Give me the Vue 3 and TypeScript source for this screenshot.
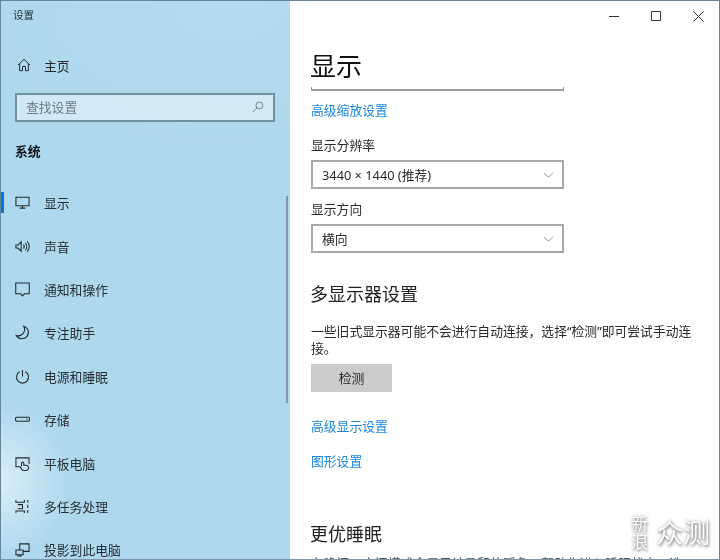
<script setup lang="ts">
const items: { label: string; icon: string }[] = [
  { label: '显示', icon: 'display' },
  { label: '声音', icon: 'sound' },
  { label: '通知和操作', icon: 'notify' },
  { label: '专注助手', icon: 'moon' },
  { label: '电源和睡眠', icon: 'power' },
  { label: '存储', icon: 'storage' },
  { label: '平板电脑', icon: 'tablet' },
  { label: '多任务处理', icon: 'multi' },
  { label: '投影到此电脑', icon: 'project' },
]
</script>

<template>
  <div class="window">
    <aside class="side">
      <div class="wintitle">设置</div>
      <div class="home">
        <svg class="ico" viewBox="0 0 16 16"><path d="M1 8.2 8 1.6l7 6.6M3 6.8v7.7h3.4V9.6h3.2v4.9H13V6.8" /></svg>
        <span>主页</span>
      </div>
      <div class="search">
        <span>查找设置</span>
        <svg class="lens" viewBox="0 0 14 14"><circle cx="8.6" cy="5.2" r="4" /><path d="M5.8 8 1.2 12.8" /></svg>
      </div>
      <div class="group">系统</div>
      <nav class="list">
        <div v-for="(it, i) in items" :key="it.label" class="row" :class="{ on: i === 0 }">
          <svg class="ico rowico" viewBox="0 0 16 16">
            <template v-if="it.icon === 'display'"><path d="M1 2.5h14v9H1zM8 11.5v2.2M5 14h6" /></template>
            <template v-else-if="it.icon === 'sound'"><path d="M1 6.3h2.2L6.6 3v10L3.2 9.7H1zM9 6a3 3 0 0 1 0 4M11 4.2a5.6 5.6 0 0 1 0 7.6M13 2.4a8.4 8.4 0 0 1 0 11.2" /></template>
            <template v-else-if="it.icon === 'notify'"><path d="M.8 1h14.4v11.6H10l-2 2.2-2-2.2H.8z" /></template>
            <template v-else-if="it.icon === 'moon'"><path d="M9.2 1.2a6.8 6.8 0 0 1-7.9 10A6.9 6.9 0 1 0 9.2 1.2z" /></template>
            <template v-else-if="it.icon === 'power'"><path d="M8 1v7M5 3a6.4 6.4 0 1 0 6 0" /></template>
            <template v-else-if="it.icon === 'storage'"><path d="M2.4 5.6h12.2a.8.8 0 0 1 .8.8v2.6a.8.8 0 0 1-.8.8H2.4a2.1 2.1 0 0 1 0-4.2zM12 7.7h1.4" /></template>
            <template v-else-if="it.icon === 'tablet'"><path d="M6 11.5H1V2h14v6.5M7 11V7.6a1.2 1.2 0 0 1 2.4 0v2.2h2.4a2.6 2.6 0 0 1 2.7 2.5v.3a2.8 2.8 0 0 1-2.8 2.8H9.8A3.4 3.4 0 0 1 7 14l-1.6-2.4" /></template>
            <template v-else-if="it.icon === 'multi'"><path d="M1 1v2.4h9V1M3 6h5v4.4H3M1 15v-2.2h9V15M13.6 1v3M13.6 6.2v3.4M13.6 11.8V15" /></template>
            <template v-else><path d="M5 8.5V2h10v8H8.8M1 8.5h7.6v5H1zM2.5 15h4.6" /></template>
          </svg>
          <span>{{ it.label }}</span>
        </div>
      </nav>
      <i class="scroll"></i>
    </aside>

    <main class="main">
      <div class="controls">
        <svg viewBox="0 0 11 11"><path d="M0 5.5h10" /></svg>
        <svg viewBox="0 0 11 11"><path d="M.5.5h9v9h-9z" /></svg>
        <svg viewBox="0 0 11 11"><path d="m.5.5 10 10M10.5.5l-10 10" /></svg>
      </div>
      <h1>显示</h1>
      <div class="slider"></div>
      <a class="link first">高级缩放设置</a>
      <label class="lbl">显示分辨率</label>
      <div class="select">
        <span>3440 × 1440 (推荐)</span>
        <svg viewBox="0 0 14 8"><path d="m1 1 6 6 6-6" /></svg>
      </div>
      <label class="lbl second">显示方向</label>
      <div class="select">
        <span>横向</span>
        <svg viewBox="0 0 14 8"><path d="m1 1 6 6 6-6" /></svg>
      </div>
      <h2>多显示器设置</h2>
      <p class="para">一些旧式显示器可能不会进行自动连接，选择“检测”即可尝试手动连接。</p>
      <button class="btn">检测</button>
      <a class="link adv">高级显示设置</a>
      <a class="link gfx">图形设置</a>
      <h2 class="sleep">更优睡眠</h2>
      <p class="para clip">在晚间，夜间模式会显示较柔和的暖色，帮助你进入睡眠状态。选</p>
      <div class="mark">
        <span class="mark-v">新<br />浪</span>
        <span class="mark-h">众测</span>
      </div>
    </main>
  </div>
</template>

<style>
html, body { margin: 0; height: 100%; overflow: hidden; background: #fff; }
</style>

<style scoped>
.window {
  box-sizing: border-box;
  width: 720px;
  height: 560px;
  display: flex;
  overflow: hidden;
  border: 1px solid #64859c;
  border-bottom-color: #7b97aa;
  font-family: "Noto Sans", "Noto Sans CJK SC", sans-serif;
  color: #1c1c1c;
  filter: blur(0.3px);
}
.side {
  position: relative;
  flex: 0 0 289px;
  box-sizing: border-box;
  height: 558px;
  padding: 0 0 0 14px;
  overflow: hidden;
  background:
    radial-gradient(ellipse 68px 78px at 0 480px, rgba(255,255,255,.55), rgba(255,255,255,0) 100%),
    radial-gradient(ellipse 260px 150px at 230px 10px, rgba(255,255,255,.08), rgba(255,255,255,0) 100%),
    #aed8ee;
}
.wintitle { font-size: 10.6px; line-height: 14px; margin: 7px 0 0 -2px; color: #243038; }
.home {
  display: flex;
  align-items: center;
  height: 24px;
  margin-top: 31px;
  padding-left: 2px;
  font-size: 12.8px;
  color: #20282e;
}
.home span { margin-left: 13px; }
.ico {
  flex: 0 0 14px;
  width: 14px;
  height: 14px;
  fill: none;
  stroke: #20282e;
  stroke-width: 1.1;
}
.rowico { flex-basis: 15px; width: 15px; height: 15px; }
.search {
  box-sizing: border-box;
  width: 260px;
  height: 29px;
  margin-top: 16px;
  padding: 0 9px 2px;
  display: flex;
  align-items: center;
  justify-content: space-between;
  font-size: 12.8px;
  color: #6c7e88;
  border: 2px solid #71919f;
  background: rgba(255,255,255,.44);
}
.lens { width: 12px; height: 12px; fill: none; stroke: #66767f; stroke-width: 1; }
.group { font-size: 12.8px; font-weight: 700; line-height: 18px; margin-top: 20px; color: #10161a; }
.list { margin-top: 21px; margin-left: -14px; }
.row {
  position: relative;
  display: flex;
  align-items: center;
  height: 43.4px;
  padding-left: 14px;
  font-size: 12.8px;
  color: #262e34;
}
.row span { margin-left: 14px; }
.row.on::before {
  content: "";
  position: absolute;
  left: 0;
  top: 11px;
  width: 3px;
  height: 21px;
  background: #0078d7;
}
.scroll {
  position: absolute;
  left: 285px;
  top: 195px;
  width: 2px;
  height: 207px;
  background: #7f97a8;
}
.main {
  position: relative;
  flex: 1;
  height: 558px;
  box-sizing: border-box;
  padding: 0 0 0 21px;
  overflow: hidden;
  background: #fff;
}
.controls {
  position: absolute;
  top: 10px;
  right: 15px;
  display: flex;
  gap: 31px;
}
.controls svg { width: 11px; height: 11px; fill: none; stroke: #333; stroke-width: 1; }
h1 { margin: 47px 0 0 -1px; font-size: 26px; line-height: 36px; font-weight: 400; color: #111; }
.slider {
  box-sizing: border-box;
  width: 253px;
  height: 4px;
  margin-top: 3px;
  border: 1px solid #9c9c9c;
  border-top: 0;
  border-bottom-width: 2px;
}
.link { display: block; font-size: 12.8px; line-height: 18px; color: #1b86dc; }
.first { margin-top: 10px; }
.lbl { display: block; font-size: 12.8px; line-height: 18px; margin-top: 17px; color: #2a2a2a; }
.second { margin-top: 11px; }
.select {
  box-sizing: border-box;
  width: 253px;
  height: 29px;
  margin-top: 6px;
  padding: 0 8px 0 9px;
  display: flex;
  align-items: center;
  justify-content: space-between;
  border: 2px solid #a8a8a8;
  font-size: 12.8px;
  color: #2a2a2a;
}
.select svg { width: 11px; height: 6px; fill: none; stroke: #666; stroke-width: 1; }
h2 { margin: 28px 0 0 -1px; font-size: 18px; line-height: 27px; font-weight: 400; color: #222; }
.para {
  width: 385px;
  margin: 15px 0 0;
  font-size: 12.8px;
  line-height: 17px;
  color: #2a2a2a;
}
.btn {
  display: block;
  width: 81px;
  height: 28px;
  margin: 7px 0 0;
  padding: 0 0 2px;
  border: 0;
  background: #cbcbcb;
  font: inherit;
  font-size: 12.8px;
  color: #2a2a2a;
}
.adv { margin-top: 25px; }
.gfx { margin-top: 17px; }
.sleep { margin-top: 51px; }
.clip { width: 420px; white-space: nowrap; margin-top: 7px; color: #555; }
.mark {
  position: absolute;
  right: 9px;
  bottom: 8px;
  display: flex;
  align-items: center;
  gap: 8px;
  color: #fbfbfb;
  text-shadow: 1px 2px 3px rgba(0,0,0,.4), 0 0 3px rgba(0,0,0,.35);
}
.mark-v { font-size: 17px; line-height: 18px; }
.mark-h { font-size: 27px; line-height: 30px; }
</style>
